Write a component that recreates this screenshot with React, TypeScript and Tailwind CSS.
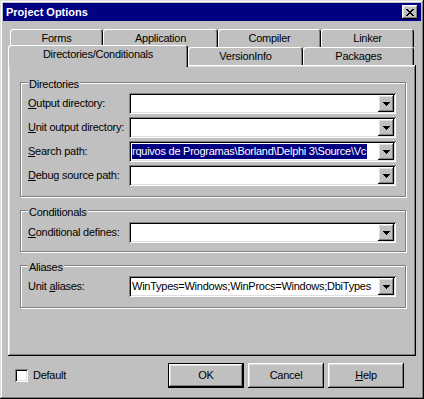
import type { ReactNode } from "react";

const raised =
  "shadow-[inset_-1px_-1px_0_#000,inset_1px_1px_0_#fff,inset_-2px_-2px_0_#808080,inset_2px_2px_0_#dfdfdf]";
const frame =
  "shadow-[inset_-1px_-1px_0_#000,inset_1px_1px_0_#dfdfdf,inset_-2px_-2px_0_#808080,inset_2px_2px_0_#fff]";
const sunken =
  "shadow-[inset_1px_1px_0_#808080,inset_-1px_-1px_0_#fff,inset_2px_2px_0_#000,inset_-2px_-2px_0_#dfdfdf]";
const tabEdge =
  "shadow-[inset_1px_1px_0_#fff,inset_-1px_0_0_#000,inset_-2px_0_0_#808080]";

function Arrow() {
  return (
    <svg width="7" height="4" viewBox="0 0 7 4" shapeRendering="crispEdges">
      <rect x="0" y="0" width="7" height="1" fill="#000" />
      <rect x="1" y="1" width="5" height="1" fill="#000" />
      <rect x="2" y="2" width="3" height="1" fill="#000" />
      <rect x="3" y="3" width="1" height="1" fill="#000" />
    </svg>
  );
}

function CloseGlyph() {
  const rows = ["11000011", "01100110", "00111100", "00011000", "00111100", "01100110", "11000011"];
  return (
    <svg width="8" height="7" viewBox="0 0 8 7" shapeRendering="crispEdges">
      {rows.map((r, y) =>
        r.split("").map((c, x) =>
          c === "1" ? <rect key={`${x}-${y}`} x={x} y={y} width="1" height="1" fill="#000" /> : null
        )
      )}
    </svg>
  );
}

function Combo({ children }: { children?: ReactNode }) {
  return (
    <div className={`w-[267px] h-[21px] p-[2px] bg-white flex ${sunken}`}>
      <div className="flex-1 overflow-hidden whitespace-nowrap flex items-center pl-[1px]">{children}</div>
      <div className={`w-[16px] h-full bg-[#c0c0c0] flex items-center justify-center ${raised}`}>
        <Arrow />
      </div>
    </div>
  );
}

function Row({ label, children }: { label: ReactNode; children?: ReactNode }) {
  return (
    <div className="flex items-center h-[21px]">
      <div className="w-[108px] pl-[7px] whitespace-nowrap">{label}</div>
      <Combo>{children}</Combo>
    </div>
  );
}

function Group({ title, className, children }: { title: string; className?: string; children: ReactNode }) {
  return (
    <div className={`border border-[#808080] shadow-[1px_1px_0_#fff,inset_1px_1px_0_#fff] ${className ?? ""}`}>
      <div className="-mt-[5px] ml-[7px] px-[1px] w-fit h-[13px] leading-[13px] bg-[#c0c0c0]">{title}</div>
      {children}
    </div>
  );
}

function Tab({ w, label }: { w: string; label: string }) {
  return (
    <div className={`${w} h-full flex items-center justify-center rounded-t-[3px] bg-[#c0c0c0] ${tabEdge}`}>
      {label}
    </div>
  );
}

export default function App() {
  return (
    <div
      className={`w-[424px] h-[399px] bg-[#c0c0c0] p-[3px] flex flex-col text-black text-[11px] leading-[13px] tracking-[-0.25px] [font-family:'Liberation_Sans',Arial,sans-serif] ${frame}`}
    >
      <div className="h-[18px] bg-[#000080] flex items-center justify-between pl-[3px] pr-[3px]">
        <span className="text-white font-bold tracking-normal">Project Options</span>
        <div className={`w-[16px] h-[14px] bg-[#c0c0c0] flex items-center justify-center ${raised}`}>
          <CloseGlyph />
        </div>
      </div>

      <div className="mt-[8px] flex flex-col">
        <div className="h-[18px] flex pl-[7px]">
          <Tab w="w-[93px]" label="Forms" />
          <Tab w="w-[115px]" label="Application" />
          <Tab w="w-[103px]" label="Compiler" />
          <Tab w="w-[93px]" label="Linker" />
        </div>
        <div className="h-[18px] flex items-end pl-[5px]">
          <div
            className={`w-[180px] h-[22px] -mb-[2px] relative z-10 flex justify-center pt-[3px] rounded-t-[3px] bg-[#c0c0c0] ${tabEdge}`}
          >
            Directories/Conditionals
          </div>
          <Tab w="w-[115px]" label="VersionInfo" />
          <Tab w="w-[111px]" label="Packages" />
        </div>
      </div>

      <div className={`mx-[5px] h-[291px] pt-[17px] pl-[12px] pr-[10px] flex flex-col ${raised}`}>
        <Group title="Directories" className="pb-[10px]">
          <div className="mt-[2px] flex flex-col gap-[3px]">
            <Row label={<><u>O</u>utput directory:</>} />
            <Row label={<><u>U</u>nit output directory:</>} />
            <Row label={<><u>S</u>earch path:</>}>
              <span className="bg-[#000080] text-white h-[15px] leading-[15px] pr-[1px]">
                rquivos de Programas\Borland\Delphi 3\Source\Vc
              </span>
            </Row>
            <Row label={<><u>D</u>ebug source path:</>} />
          </div>
        </Group>

        <Group title="Conditionals" className="mt-[13px] pb-[8px]">
          <div className="mt-[3px]">
            <Row label={<><u>C</u>onditional defines:</>} />
          </div>
        </Group>

        <Group title="Aliases" className="mt-[13px] pb-[10px]">
          <div className="mt-[2px]">
            <Row label={<>Unit <u>a</u>liases:</>}>
              <span>WinTypes=Windows;WinProcs=Windows;DbiTypes</span>
            </Row>
          </div>
        </Group>
      </div>

      <div className="mt-[7px] h-[25px] flex items-center">
        <div className={`ml-[12px] w-[13px] h-[13px] bg-white ${sunken}`} />
        <span className="ml-[5px]">Default</span>
        <div className="ml-auto mr-[17px] flex gap-[4px]">
          <div className="w-[76px] h-[25px] border border-black">
            <div className={`w-full h-full flex items-center justify-center ${raised}`}>OK</div>
          </div>
          <div className={`w-[76px] h-[25px] flex items-center justify-center ${raised}`}>Cancel</div>
          <div className={`w-[76px] h-[25px] flex items-center justify-center ${raised}`}>
            <span>
              <u>H</u>elp
            </span>
          </div>
        </div>
      </div>
    </div>
  );
}
